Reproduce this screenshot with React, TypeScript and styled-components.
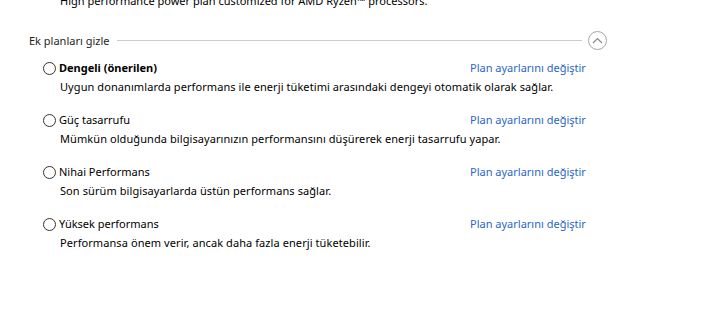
import React from 'react';
import styled, { createGlobalStyle } from 'styled-components';

const GlobalStyle = createGlobalStyle`
  html, body {
    margin: 0;
    padding: 0;
    background: #ffffff;
    overflow: hidden;
  }

  body {
    font-family: 'Noto Sans', 'Open Sans', sans-serif;
    font-size: 11px;
    color: #000000;
  }
`;

const StyledPage = styled.main`
  width: 716px;
  height: 315px;
  overflow: hidden;
  padding-left: 29px;
  box-sizing: border-box;
`;

const StyledCutLine = styled.p`
  margin: -8px 0 0;
  padding-left: 31px;
  line-height: 18px;
  white-space: nowrap;
`;

const StyledHeader = styled.div`
  display: flex;
  align-items: center;
  width: 578px;
  height: 20px;
  margin-top: 20px;
  color: #1e1e1e;
`;

const StyledHeaderTitle = styled.span`
  white-space: nowrap;
`;

const StyledRule = styled.span`
  flex: 1;
  height: 1px;
  margin: 0 6px 0 7px;
  background-color: #cccccc;
`;

const StyledToggle = styled.button`
  display: flex;
  align-items: center;
  justify-content: center;
  width: 19px;
  height: 19px;
  padding: 0;
  border: 1px solid #a6a6a6;
  border-radius: 50%;
  background: #ffffff;
`;

const StyledList = styled.ul`
  display: flex;
  flex-direction: column;
  gap: 16px;
  margin: 9px 0 0;
  padding: 0 0 0 14px;
  list-style: none;
`;

const StyledItem = styled.li`
  display: grid;
  grid-template-columns: 427px auto;
  grid-template-rows: 18px 18px;
  line-height: 18px;
`;

const StyledTitleLabel = styled.label`
  display: flex;
  align-items: center;
  gap: 3px;
  white-space: nowrap;
`;

const StyledRadio = styled.span`
  width: 13px;
  height: 13px;
  box-sizing: border-box;
  border: 1px solid #333333;
  border-radius: 50%;
  background: #ffffff;
`;

const StyledTitle = styled.span<{ $bold?: boolean }>`
  font-weight: ${({ $bold }) => ($bold ? 700 : 400)};
`;

const StyledLink = styled.a`
  color: #2a66c9;
  text-decoration: none;
  white-space: nowrap;
`;

const StyledDescription = styled.p`
  grid-column: 1 / -1;
  margin: 0;
  padding: 1px 0 0 17px;
  white-space: nowrap;
  letter-spacing: 0.08px;
`;

const plans = [
  {
    title: 'Dengeli (önerilen)',
    bold: true,
    text: 'Uygun donanımlarda performans ile enerji tüketimi arasındaki dengeyi otomatik olarak sağlar.',
  },
  {
    title: 'Güç tasarrufu',
    text: 'Mümkün olduğunda bilgisayarınızın performansını düşürerek enerji tasarrufu yapar.',
  },
  {
    title: 'Nihai Performans',
    text: 'Son sürüm bilgisayarlarda üstün performans sağlar.',
  },
  {
    title: 'Yüksek performans',
    text: 'Performansa önem verir, ancak daha fazla enerji tüketebilir.',
  },
];

export default function App() {
  return (
    <>
      <GlobalStyle />
      <StyledPage>
        <StyledCutLine>High performance power plan customized for AMD Ryzen™ processors.</StyledCutLine>

        <StyledHeader>
          <StyledHeaderTitle>Ek planları gizle</StyledHeaderTitle>
          <StyledRule />
          <StyledToggle aria-label="Gizle">
            <svg width="11" height="7" viewBox="0 0 11 7" fill="none">
              <path d="M1 6 L5.5 1.5 L10 6" stroke="#8a8a8a" strokeWidth="1.2" />
            </svg>
          </StyledToggle>
        </StyledHeader>

        <StyledList>
          {plans.map((plan) => (
            <StyledItem key={plan.title}>
              <StyledTitleLabel>
                <StyledRadio />
                <StyledTitle $bold={plan.bold}>{plan.title}</StyledTitle>
              </StyledTitleLabel>
              <StyledLink href="#">Plan ayarlarını değiştir</StyledLink>
              <StyledDescription>{plan.text}</StyledDescription>
            </StyledItem>
          ))}
        </StyledList>
      </StyledPage>
    </>
  );
}
